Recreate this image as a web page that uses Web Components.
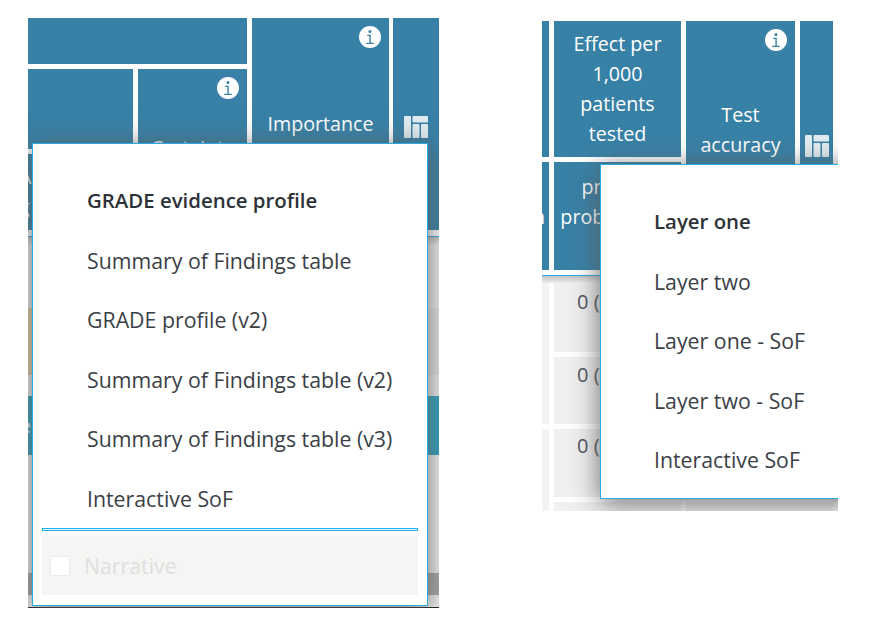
<!DOCTYPE html>
<html>
<head>
<meta charset="utf-8">
<style>
  html, body { margin: 0; background: #fff; }
  body {
    width: 892px;
    height: 630px;
    overflow: hidden;
    box-sizing: border-box;
    display: flex;
    align-items: flex-start;
    padding: 18px 0 0 28px;
    font-family: 'Open Sans', sans-serif;
  }
  .second { margin: 3px 0 0 103px; }
</style>
</head>
<body>

<profile-panel style="width:411px;height:590px">
  <head-grid style="grid-template-columns:105px 109px 137px 46px;grid-template-rows:46px 80px 76px;column-gap:5px;row-gap:5px">
    <head-cell style="grid-area:1/1/2/3"></head-cell>
    <head-cell style="grid-area:2/1/3/2"></head-cell>
    <head-cell style="grid-area:3/1/4/2;justify-content:flex-start;align-items:flex-start;padding-top:8px"><span style="margin-left:-9px;display:block;text-align:left">A<br>g</span></head-cell>
    <head-cell info style="grid-area:2/2/4/3;padding-bottom:4px">Certainty</head-cell>
    <head-cell info style="grid-area:1/3/4/4">Importance</head-cell>
    <head-cell table style="grid-area:1/4/4/5;padding:6px 2px 0 0;margin-left:-1px"></head-cell>
  </head-grid>
  <head-rule style="--gap:6px;--fade:8px"></head-rule>
  <data-band style="height:63px;--bg:#f0f0f0"></data-band>
  <data-band style="height:67px;--bg:linear-gradient(90deg,#e8d0a2 0 60px,#e6e6e6 60px)"></data-band>
  <data-band style="height:21px;--bg:#f0f0f0"></data-band>
  <data-band style="height:59px;--bg:#2ea2bc;color:#fff"><span style="margin-left:-8px">e</span></data-band>
  <data-band style="height:118px;--bg:#f2f2f2"></data-band>
  <data-band style="height:22px;--bg:#a8a8a8"></data-band>
  <data-band style="height:12px;--bg:#f0f0f0"></data-band>
  <data-band style="height:1px;--bg:#222"></data-band>

  <drop-menu style="left:4px;top:125px;width:396px;height:463px;padding-top:27px">
    <menu-item bold>GRADE evidence profile</menu-item>
    <menu-item>Summary of Findings table</menu-item>
    <menu-item>GRADE profile (v2)</menu-item>
    <menu-item>Summary of Findings table (v2)</menu-item>
    <menu-item>Summary of Findings table (v3)</menu-item>
    <menu-item>Interactive SoF</menu-item>
    <menu-rule></menu-rule>
    <narrative-box>Narrative</narrative-box>
  </drop-menu>
</profile-panel>

<profile-panel class="second" style="width:296px;height:490px">
  <head-grid style="grid-template-columns:7px 127px 109px 33px;grid-template-rows:136px 108px;column-gap:5px;row-gap:5px">
    <head-cell style="grid-area:1/1/2/2"></head-cell>
    <head-cell style="grid-area:2/1/3/2;justify-content:flex-start;align-items:flex-start;padding-top:40px"><span style="margin-left:-9px">n</span></head-cell>
    <head-cell style="grid-area:1/2/2/3">Effect per<br>1,000<br>patients<br>tested</head-cell>
    <head-cell style="grid-area:2/2/3/3;justify-content:flex-start;padding-top:10px">pre-test<br>probabilities</head-cell>
    <head-cell info style="grid-area:1/3/3/4;justify-content:flex-start;padding-top:79px">Test<br>accuracy</head-cell>
    <head-cell table style="grid-area:1/4/3/5"></head-cell>
  </head-grid>
  <head-rule style="--gap:5px;--fade:7px"></head-rule>
  <data-grid>
    <data-cell style="grid-area:1/1/3/2;--bg:#f3f3f3"></data-cell>
    <data-cell style="grid-area:3/1/5/2;--bg:#f3f3f3"></data-cell>
    <data-cell style="grid-area:1/2/2/3">0 (0 to 0)</data-cell>
    <data-cell style="grid-area:2/2/3/3;--top:3px">0 (0 to 0)</data-cell>
    <data-cell style="grid-area:3/2/4/3;--top:2px">0 (0 to 0)</data-cell>
    <data-cell style="grid-area:4/2/5/3"></data-cell>
    <data-cell style="grid-area:4/3/5/4"></data-cell>
    <data-cell style="grid-area:4/4/5/5"></data-cell>
  </data-grid>

  <drop-menu style="left:58px;top:143px;width:340px;height:335px;padding-top:27px;--indent:53px">
    <menu-item bold>Layer one</menu-item>
    <menu-item>Layer two</menu-item>
    <menu-item>Layer one - SoF</menu-item>
    <menu-item>Layer two - SoF</menu-item>
    <menu-item>Interactive SoF</menu-item>
  </drop-menu>
</profile-panel>

<script>
const panelTemplate = document.createElement('template');
panelTemplate.innerHTML = `
  <style>
  :host {
    display: flex;
    flex-direction: column;
    position: relative;
    overflow: hidden;
    flex: none;
  }
  </style>
  <slot></slot>
`;

const headGridTemplate = document.createElement('template');
headGridTemplate.innerHTML = `
  <style>
  :host {
    display: grid;
    flex: none;
  }
  </style>
  <slot></slot>
`;

const headCellTemplate = document.createElement('template');
headCellTemplate.innerHTML = `
  <style>
  :host {
    display: flex;
    flex-direction: column;
    align-items: center;
    justify-content: center;
    position: relative;
    overflow: hidden;
    box-sizing: border-box;
    background: #3881a6;
    color: #fff;
    font-size: 19.7px;
    line-height: 30px;
    text-align: center;
    white-space: nowrap;
  }

  .info {
    display: none;
    position: absolute;
    top: 8px;
    right: 8px;
  }

  .table {
    display: none;
  }

  :host([info]) .info,
  :host([table]) .table {
    display: block;
  }
  </style>
  <svg class="info" width="22" height="22" viewBox="0 0 22 22">
    <circle cx="11" cy="11" r="11" fill="#fff"/>
    <circle cx="11" cy="5.4" r="1.5" fill="#3881a6"/>
    <path d="M8.2 8.8h3.6v8h3v1.2H7.2v-1.2h3.2v-6.8H8.2z" fill="#3881a6"/>
  </svg>
  <svg class="table" width="24" height="22" viewBox="0 0 24 22" fill="#fff" fill-opacity="0.85">
    <rect width="7" height="22" rx="1"/>
    <rect x="8.5" width="15.5" height="6.5" rx="1"/>
    <rect x="8.5" y="8" width="7" height="14" rx="1"/>
    <rect x="17" y="8" width="7" height="14" rx="1"/>
  </svg>
  <div><slot></slot></div>
`;

const headRuleTemplate = document.createElement('template');
headRuleTemplate.innerHTML = `
  <style>
  :host {
    display: block;
    flex: none;
    padding-top: var(--gap);
  }

  .line {
    height: 1px;
    background: #29abe2;
  }

  .fade {
    height: var(--fade);
    background: linear-gradient(#c4c4c4, #ededed);
  }
  </style>
  <div class="line"></div>
  <div class="fade"></div>
`;

const bandTemplate = document.createElement('template');
bandTemplate.innerHTML = `
  <style>
  :host {
    display: flex;
    align-items: center;
    flex: none;
    overflow: hidden;
    background: var(--bg);
    font-size: 19.7px;
  }
  </style>
  <slot></slot>
`;

const dataGridTemplate = document.createElement('template');
dataGridTemplate.innerHTML = `
  <style>
  :host {
    display: grid;
    flex: none;
    grid-template-columns: 7px 127px 147px 4px;
    grid-template-rows: 69px 67px 68px 9px;
    column-gap: 5px;
    row-gap: 5px;
  }
  </style>
  <slot></slot>
`;

const dataCellTemplate = document.createElement('template');
dataCellTemplate.innerHTML = `
  <style>
  :host {
    display: block;
    box-sizing: border-box;
    overflow: hidden;
    padding-top: var(--top, 4px);
    background: var(--bg, #f0f0f0);
    color: #4d5560;
    font-size: 20px;
    line-height: 30px;
    text-align: center;
    white-space: nowrap;
  }
  </style>
  <slot></slot>
`;

const menuTemplate = document.createElement('template');
menuTemplate.innerHTML = `
  <style>
  :host {
    display: block;
    position: absolute;
    box-sizing: border-box;
    border: 1px solid #29abe2;
    background: #fff;
    box-shadow: 0 4px 26px rgba(90, 90, 90, 0.9);
  }
  </style>
  <slot></slot>
`;

const itemTemplate = document.createElement('template');
itemTemplate.innerHTML = `
  <style>
  :host {
    display: block;
    height: 59.5px;
    padding-left: var(--indent, 54px);
    color: #3b4046;
    font-size: 21.3px;
    line-height: 59.5px;
    white-space: nowrap;
  }

  :host([bold]) {
    color: #2d3238;
    font-weight: 600;
    font-size: 20.4px;
  }
  </style>
  <slot></slot>
`;

const ruleTemplate = document.createElement('template');
ruleTemplate.innerHTML = `
  <style>
  :host {
    display: block;
    box-sizing: border-box;
    height: 3px;
    margin: 0 9px;
    border: 1px solid #22b0ea;
    background: #e8f7fd;
  }
  </style>
`;

const narrativeTemplate = document.createElement('template');
narrativeTemplate.innerHTML = `
  <style>
  :host {
    display: flex;
    align-items: center;
    height: 59px;
    margin: 5px 9px 0;
    padding-left: 8px;
    background: #f5f5f3;
    color: #dfdfdf;
    font-size: 21.3px;
  }

  .check {
    box-sizing: border-box;
    width: 20px;
    height: 20px;
    margin-right: 14px;
    border: 1px solid #ececec;
    background: #fff;
  }
  </style>
  <div class="check"></div>
  <slot></slot>
`;

const define = (name, template) => {
  customElements.define(name, class extends HTMLElement {
    constructor() {
      super();
      this.attachShadow({ mode: 'open' }).appendChild(template.content.cloneNode(true));
    }
  });
};

define('profile-panel', panelTemplate);
define('head-grid', headGridTemplate);
define('head-cell', headCellTemplate);
define('head-rule', headRuleTemplate);
define('data-band', bandTemplate);
define('data-grid', dataGridTemplate);
define('data-cell', dataCellTemplate);
define('drop-menu', menuTemplate);
define('menu-item', itemTemplate);
define('menu-rule', ruleTemplate);
define('narrative-box', narrativeTemplate);
</script>
</body>
</html>
